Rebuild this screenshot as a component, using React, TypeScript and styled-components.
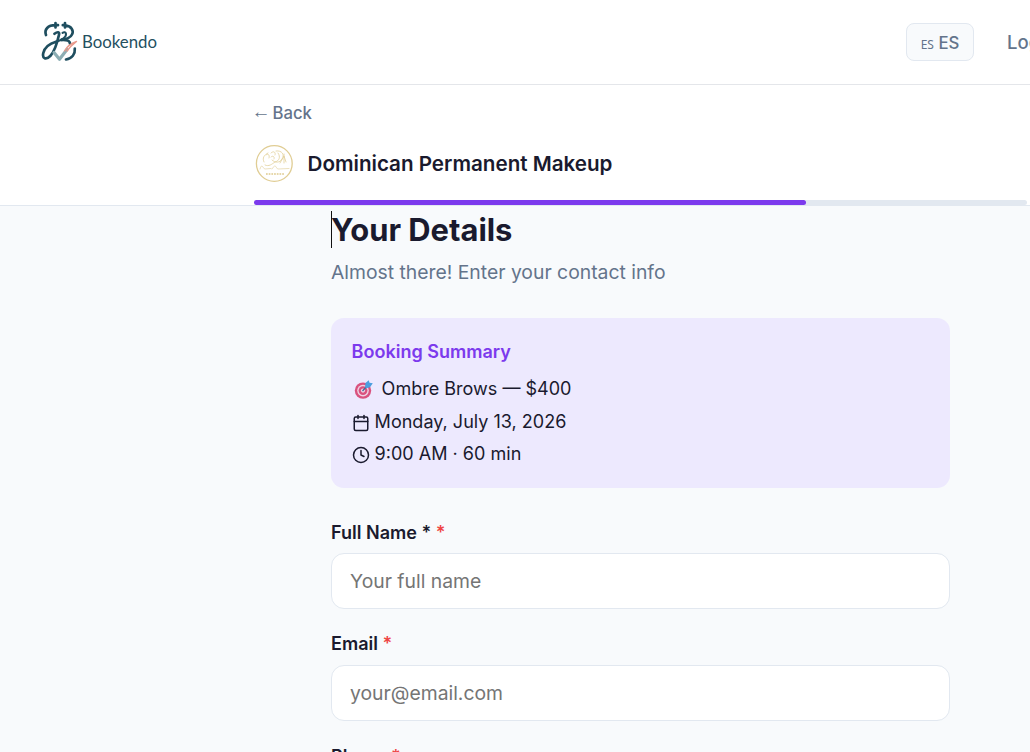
import React from "react";
import styled, { createGlobalStyle } from "styled-components";
import { Calendar, Clock } from "lucide-react";

const Global = createGlobalStyle`
  * { box-sizing: border-box; }
  html, body { margin: 0; padding: 0; overflow: hidden; }
  body {
    height: 752px;
    background: #f8fafc;
    color: #1a1a2e;
    font-family: Inter, "Liberation Sans", sans-serif;
  }
`;

const Page = styled.div`
  height: 752px;
  overflow: hidden;
`;

const Nav = styled.header`
  height: 85px;
  padding: 0 0 0 41px;
  display: flex;
  align-items: center;
  justify-content: space-between;
  background: #fff;
  border-bottom: 1px solid #e4e6ea;
  overflow: hidden;
`;

const Brand = styled.div`
  display: flex;
  align-items: center;
  gap: 4px;
  color: #24505f;
  font: 400 16.8px/22px Lato, "Noto Sans", sans-serif;
`;

const NavRight = styled.div`
  display: flex;
  align-items: center;
  gap: 33px;
  width: 124px;
  white-space: nowrap;
`;

const LangButton = styled.button`
  flex: none;
  width: 68px;
  height: 38px;
  padding: 2px 0 0;
  border: 1px solid #e2e8f0;
  border-radius: 8px;
  background: #f8fafc;
  color: #64748b;
  font: 500 16.8px/22px Inter, sans-serif;
`;

const Flag = styled.span`
  font: 400 12px/12px "Noto Sans", sans-serif;
`;

const NavLink = styled.span`
  color: #64748b;
  font-size: 18.5px;
  font-weight: 500;
`;

const BookingHeader = styled.section`
  height: 121px;
  padding: 18px 3px 0 254px;
  background: #fff;
  border-bottom: 1px solid #e2e8f0;
`;

const Back = styled.div`
  display: flex;
  gap: 4.5px;
  height: 20px;
  color: #64748b;
  font-size: 16.7px;
  font-weight: 500;
  line-height: 20px;
`;

const Arrow = styled.span`
  display: flex;
  justify-content: center;
  width: 14px;
  font: 400 19px/18px "Liberation Serif", serif;
`;

const Business = styled.div`
  display: flex;
  align-items: center;
  gap: 12.5px;
  height: 41px;
  margin: 20px 0 16px;
  font-size: 20.62px;
  font-weight: 600;
`;

const Track = styled.div`
  height: 5px;
  border-radius: 3px;
  background: #e2e8f0;
`;

const Progress = styled.div<{ $step: number; $total: number }>`
  width: ${(p) => (p.$step / p.$total) * 100}%;
  height: 100%;
  border-radius: 3px;
  background: #7c3aed;
`;

const Form = styled.main`
  width: 619px;
  margin-left: 331px;
  padding-top: 5px;
`;

const Title = styled.h1`
  margin: 0;
  height: 37px;
  box-shadow: inset 1px 0 #111;
  font-size: 30.9px;
  font-weight: 700;
  line-height: 38px;
`;

const Subtitle = styled.p`
  margin: 12px 0 34px;
  color: #64748b;
  font-size: 19.33px;
  line-height: 24px;
`;

const Summary = styled.section`
  height: 170px;
  margin-bottom: 33px;
  padding: 21px 20.6px;
  border-radius: 13px;
  background: #ede9fe;
`;

const SummaryTitle = styled.h2`
  margin: 0 0 8px;
  color: #7c3aed;
  font-size: 18.04px;
  font-weight: 600;
  line-height: 26px;
`;

const SummaryRow = styled.div<{ $gap: number }>`
  display: flex;
  align-items: center;
  gap: ${(p) => p.$gap}px;
  height: 32.5px;
  font-size: 18.04px;
  line-height: 28px;
  & > svg { flex: none; margin-top: 1.5px; }
`;

const Field = styled.div`
  display: flex;
  flex-direction: column;
  gap: 9px;
  height: 112px;
`;

const Label = styled.label<{ $lift?: boolean }>`
  height: 23px;
  font-size: 18.04px;
  font-weight: 600;
  line-height: ${(p) => (p.$lift ? 22 : 24)}px;
`;

const Required = styled.span`
  color: #ef4444;
`;

const Input = styled.input`
  display: block;
  width: 100%;
  height: 56px;
  padding: 0 18px;
  border: 1px solid #e2e8f0;
  border-radius: 13px;
  background: #fff;
  font: 400 19.33px Inter, sans-serif;
  &::placeholder { color: #757575; opacity: 1; }
`;

const BookendoMark = () => (
  <svg width="37" height="42" viewBox="1 0 37 42" fill="none" strokeLinecap="round" strokeLinejoin="round">
    <g stroke="#1f4e5f" strokeWidth="2.7">
      <path d="M6 14C4 8.5 8 4.2 15.3 4.2M15.5 2V6.5M15.5 4.2H18M22.8 4.2H25M25 2V6.5M25 4.4C31.5 5 34 9.5 32 13.5C30.5 16.5 27 18.3 21.5 18.9" />
      <path d="M14.5 12.8C17.5 10.5 19.7 10.8 19 13.8C17.5 20.5 15 30 10.5 34.7C6 39.3 2 37.5 3.3 32C5 25.5 10 22.5 16 20.8" />
      <path d="M21.5 18.9C27 18.5 30 20 30 22.8M34.8 27.5C35.3 33 32 37.5 26 38.5" />
    </g>
    <path d="M16 20.8C22.5 18.8 26.5 15.8 26 12.8C25.7 11 24 10.9 22.5 11.8" stroke="#1f4e5f" strokeWidth="2.1" />
    <path d="M14 31.5L19.5 38.2L27 28.5" stroke="#8cadb3" strokeWidth="3.2" />
    <path d="M24.5 30C27 25.5 30.5 22.5 36.5 20.5C32 24 29.5 26.5 27 30" stroke="#e8998b" strokeWidth="1.4" />
  </svg>
);

const BusinessLogo = () => (
  <svg width="41" height="41" viewBox="0 0 41 41" fill="none" stroke="#e0cd94">
    <circle cx="20.3" cy="20.5" r="17.9" strokeWidth="1.3" />
    <g strokeWidth=".75" strokeLinecap="round">
      <path d="M14 10C10 12 8 15 10 19M12 12C14 10 16 12 15 15M17 10C20 7 22 10 21 12M22 8C28 7 31 12 28 16C26 20 21 20 18 17M24 10C27 14 25 18 21 19C18 21 15 24 11 22M30 11V20M26 20L30 13L32 19M17 14C19 12 21 14 20 16" />
      <path d="M6 26C8 19 9 26 11 26L17 25.5M18 26C22 19 22 26 24 26L35 25.5" opacity=".8" />
      <path d="M12 31H30" strokeWidth="2" strokeDasharray="1.7 1" strokeLinecap="butt" opacity=".8" />
    </g>
  </svg>
);

const Target = () => (
  <svg width="23" height="20" viewBox="0 0 23 20">
    <circle cx="11" cy="10.6" r="8.2" fill="#d9527f" />
    <circle cx="11" cy="10.6" r="5.8" fill="#efd3e4" />
    <circle cx="11" cy="10.6" r="4.4" fill="#d9527f" />
    <circle cx="11" cy="10.6" r="2.1" fill="#efd3e4" />
    <path d="M10.5 11L16 5" stroke="#426b9a" strokeWidth="1.3" />
    <path d="M13 7L13.5 3L16.7 .3L17.5 2.7L20.8 3.3L18 7.3L14.2 8.3Z" fill="#4c9fdf" />
  </svg>
);

export default function App() {
  return (
    <Page>
      <Global />
      <Nav>
        <Brand><BookendoMark />Bookendo</Brand>
        <NavRight>
          <LangButton><Flag>ES</Flag> ES</LangButton>
          <NavLink>Log in</NavLink>
        </NavRight>
      </Nav>
      <BookingHeader>
        <Back><Arrow>←</Arrow>Back</Back>
        <Business><BusinessLogo />Dominican Permanent Makeup</Business>
        <Track><Progress $step={5} $total={7} /></Track>
      </BookingHeader>
      <Form>
        <Title>Your Details</Title>
        <Subtitle>Almost there! Enter your contact info</Subtitle>
        <Summary>
          <SummaryTitle>Booking Summary</SummaryTitle>
          <SummaryRow $gap={7}><Target />Ombre Brows — $400</SummaryRow>
          <SummaryRow $gap={5}><Calendar size={18} strokeWidth={2} />Monday, July 13, 2026</SummaryRow>
          <SummaryRow $gap={5}><Clock size={18} strokeWidth={2} />9:00 AM · 60 min</SummaryRow>
        </Summary>
        <Field><Label>Full Name * <Required>*</Required></Label><Input placeholder="Your full name" /></Field>
        <Field><Label $lift>Email <Required>*</Required></Label><Input placeholder="your@email.com" /></Field>
        <Field><Label>Phone <Required>*</Required></Label><Input /></Field>
      </Form>
    </Page>
  );
}
